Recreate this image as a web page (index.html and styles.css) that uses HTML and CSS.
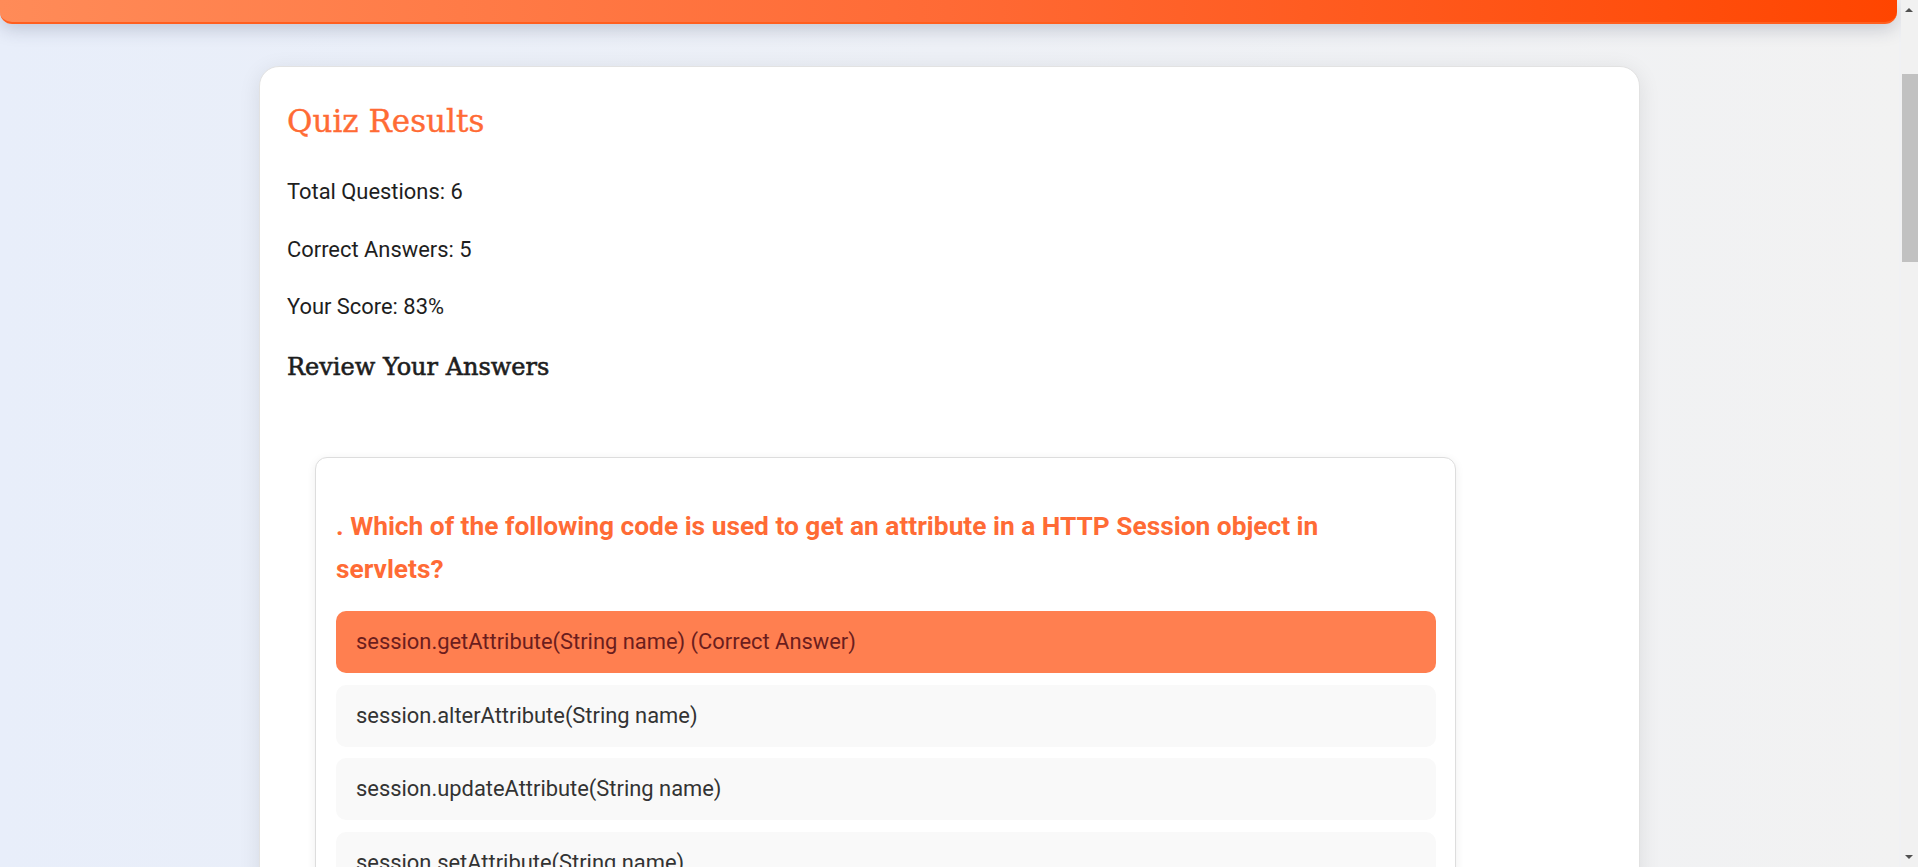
FILE: index.html
```html
<!DOCTYPE html>
<html lang="en">
<head>
<meta charset="utf-8">
<title>Quiz Results</title>
<link rel="stylesheet" href="styles.css">
</head>
<body>
<div class="page">
  <header class="top-bar"></header>
  <main class="results-card">
    <h1 class="results-title">Quiz Results</h1>
    <div class="stats">
      <p>Total Questions: 6</p>
      <p>Correct Answers: 5</p>
      <p>Your Score: 83%</p>
    </div>
    <h2 class="review-title">Review Your Answers</h2>
    <section class="question-card">
      <h3 class="question-text">. Which of the following code is used to get an attribute in a HTTP Session object in servlets?</h3>
      <div class="options">
        <div class="option correct">session.getAttribute(String name) (Correct Answer)</div>
        <div class="option">session.alterAttribute(String name)</div>
        <div class="option">session.updateAttribute(String name)</div>
        <div class="option">session.setAttribute(String name)</div>
      </div>
    </section>
  </main>
</div>
<div class="scrollbar" aria-hidden="true">
  <div class="sb-arrow sb-up"></div>
  <div class="sb-thumb"></div>
  <div class="sb-arrow sb-down"></div>
</div>
</body>
</html>
```
FILE: styles.css
```css
html {
  background: #f0f1f4;
}
body {
  margin: 0;
  font-family: Roboto, "Liberation Sans", Arial, sans-serif;
  color: #1e1e1e;
  overflow: hidden;
}
.page {
  width: 1899px;
  min-height: 867px;
  padding-bottom: 40px;
  background: linear-gradient(to right, #e8eefa 0%, #edf0f6 50%, #f2f2f2 100%);
}
.top-bar {
  box-sizing: border-box;
  height: 24px;
  width: 1897px;
  background: linear-gradient(to right, #ff8b58 0%, #ff6a35 50%, #ff4500 100%);
  border-bottom: 2px solid #ff5f1f;
  border-radius: 0 0 12px 12px;
  box-shadow: 0 5px 18px rgba(40, 50, 80, 0.22);
}
.results-card {
  box-sizing: border-box;
  width: 1381px;
  margin: 42px auto 0;
  padding: 32px 28px 40px 27px;
  background: #fff;
  border: 1px solid #e2e2e2;
  border-radius: 20px;
  box-shadow: 0 4px 22px rgba(0, 0, 0, 0.09);
}
.results-title {
  margin: 0;
  font-family: "DejaVu Serif", "Liberation Serif", serif;
  font-weight: normal;
  -webkit-text-stroke: 0.4px currentColor;
  font-size: 31px;
  line-height: 44px;
  color: #ff6b35;
}
.stats {
  display: flex;
  flex-direction: column;
  gap: 23px;
  margin-top: 32px;
}
.stats p {
  margin: 0;
  font-size: 21.9px;
  line-height: 34.5px;
}
.review-title {
  margin: 26.5px 0 0;
  font-family: "DejaVu Serif", "Liberation Serif", serif;
  font-weight: normal;
  -webkit-text-stroke: 0.6px currentColor;
  font-size: 24px;
  line-height: 32px;
  color: #1e1e1e;
}
.question-card {
  box-sizing: border-box;
  width: 1141px;
  margin: 74px 0 0 28px;
  padding: 0 19px 0 20px;
  background: #fff;
  border: 1px solid #dddddd;
  border-radius: 12px;
  box-shadow: 0 2px 10px rgba(0, 0, 0, 0.07);
}
.question-text {
  max-width: 1040px;
  margin: 46.5px 0 20.5px;
  padding-left: 0;
  font-size: 26.3px;
  font-weight: bold;
  line-height: 43px;
  color: #ff6b35;
}
.options {
  display: flex;
  flex-direction: column;
  gap: 11.6px;
  padding-bottom: 20px;
}
.option {
  box-sizing: border-box;
  height: 62px;
  padding: 14px 20px;
  font-size: 21.9px;
  line-height: 34px;
  color: #333;
  background: #f9f9f9;
  border-radius: 10px;
}
.option.correct {
  background: #ff7f50;
  color: #6b1d1d;
}
.scrollbar {
  position: fixed;
  top: 0;
  right: 0;
  width: 17px;
  height: 100vh;
  background: #f1f1f1;
}
.sb-arrow {
  position: absolute;
  left: 4px;
  width: 0;
  height: 0;
  border-left: 4px solid transparent;
  border-right: 4px solid transparent;
}
.sb-up {
  top: 8px;
  border-bottom: 4px solid #505050;
}
.sb-down {
  bottom: 8px;
  border-top: 4px solid #505050;
}
.sb-thumb {
  position: absolute;
  top: 74px;
  left: 1px;
  right: 0;
  height: 188px;
  background: #c1c1c1;
}
```
